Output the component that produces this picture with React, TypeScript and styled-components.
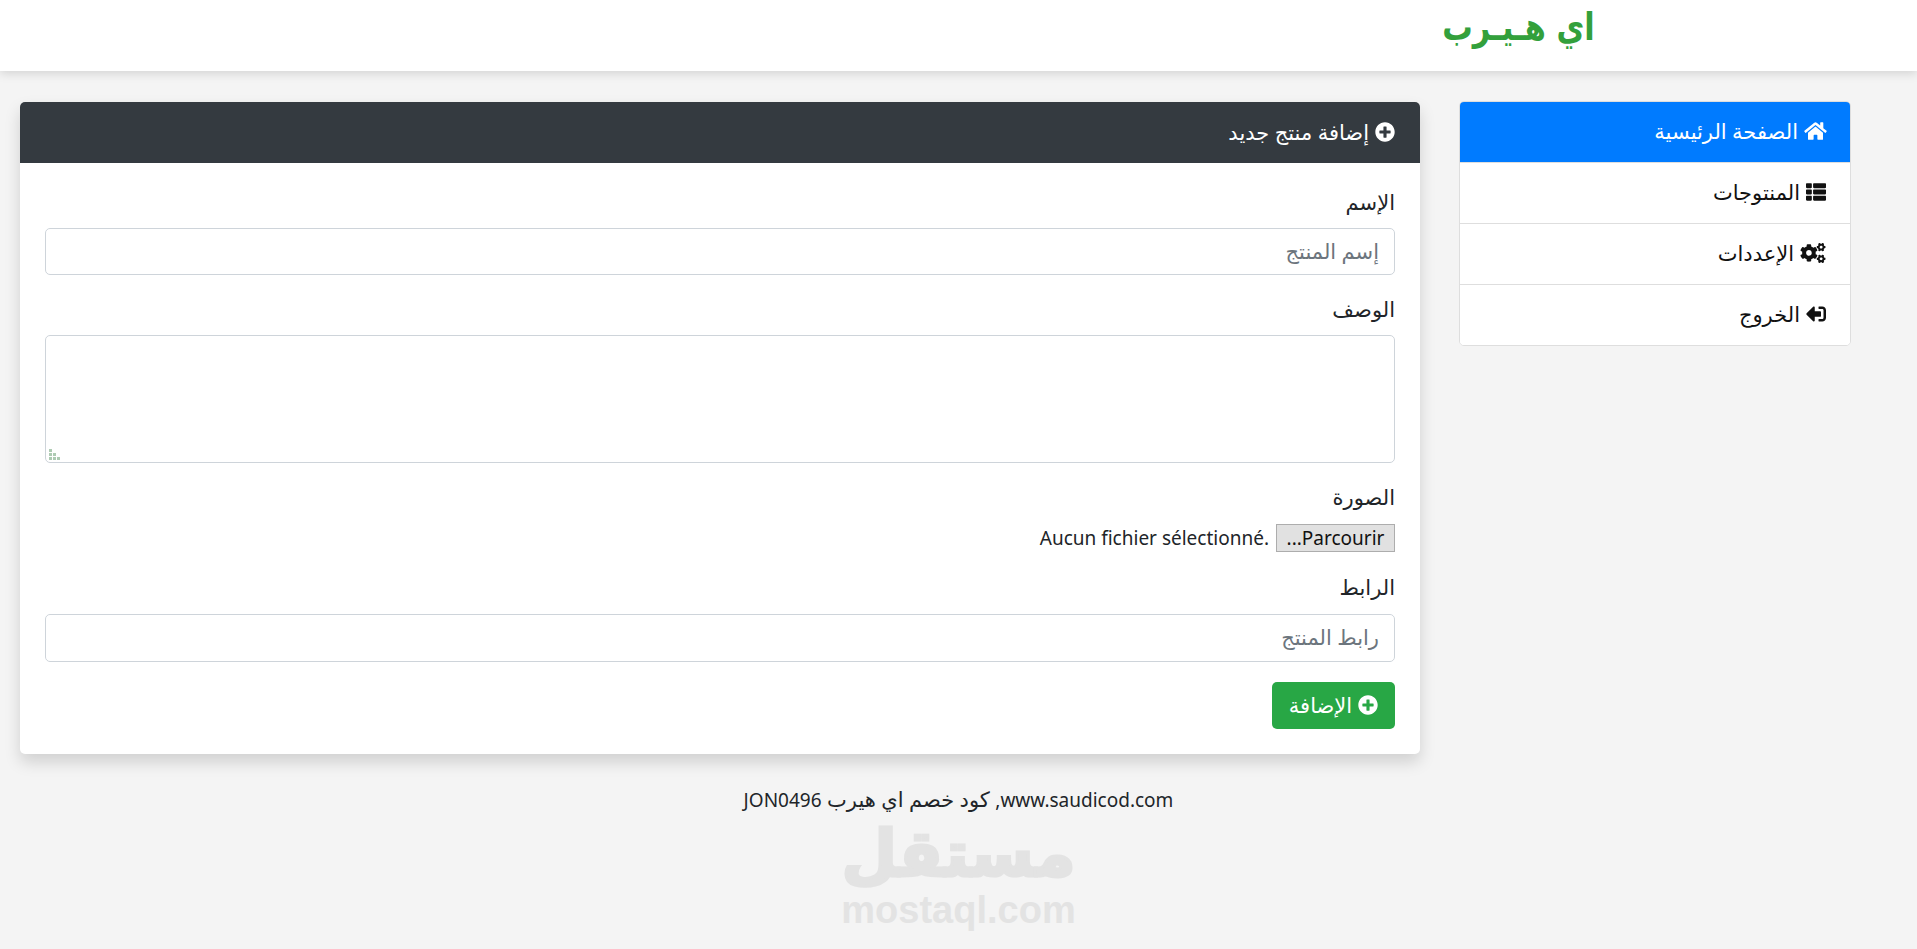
import React from 'react';
import styled, { createGlobalStyle } from 'styled-components';
import { FaCogs, FaHome, FaPlusCircle, FaSignOutAlt, FaThList } from 'react-icons/fa';

const GlobalStyle = createGlobalStyle`
  * {
    box-sizing: border-box;
  }

  html,
  body {
    margin: 0;
    height: 100%;
  }

  body {
    background: #f4f4f4;
    color: #212529;
    font-family: 'Noto Sans', 'DejaVu Sans', sans-serif;
    font-size: 21px;
    overflow: hidden;
  }
`;

function MirrorIcon({ children }: { children: React.ReactNode }) {
  return <Mirror>{children}</Mirror>;
}

const menuItems = [
  { label: 'الصفحة الرئيسية', icon: <FaHome />, iconWidth: 23, active: true },
  { label: 'المنتوجات', icon: <FaThList />, iconWidth: 20 },
  { label: 'الإعددات', icon: <FaCogs />, iconWidth: 26 },
  { label: 'الخروج', icon: <MirrorIcon><FaSignOutAlt /></MirrorIcon>, iconWidth: 20 },
];

const App = () => {
  return (
    <Page dir="rtl">
      <GlobalStyle />
      <Navbar>
        <Logo>اي هـيـرب</Logo>
      </Navbar>
      <Content>
        <Sidebar>
          {menuItems.map((item) => (
            <MenuItem key={item.label} $active={item.active} $iconWidth={item.iconWidth}>
              {item.icon}
              <span>{item.label}</span>
            </MenuItem>
          ))}
        </Sidebar>
        <Main>
          <Card>
            <CardHeader>
              <FaPlusCircle />
              <span>إضافة منتج جديد</span>
            </CardHeader>
            <CardBody>
              <Field>
                <Label htmlFor="name">الإسم</Label>
                <Input id="name" placeholder="إسم المنتج" />
              </Field>
              <Field>
                <Label htmlFor="desc">الوصف</Label>
                <TextAreaWrap>
                  <TextArea id="desc" />
                  <Grip viewBox="0 0 11 11" aria-hidden="true">
                    <rect x="0" y="0" width="3" height="3" />
                    <rect x="0" y="4" width="3" height="3" />
                    <rect x="4" y="4" width="3" height="3" />
                    <rect x="0" y="8" width="3" height="3" />
                    <rect x="4" y="8" width="3" height="3" />
                    <rect x="8" y="8" width="3" height="3" />
                  </Grip>
                </TextAreaWrap>
              </Field>
              <Field $gap={11}>
                <Label>الصورة</Label>
                <FileRow>
                  <FileButton type="button">Parcourir...</FileButton>
                  <FileName dir="ltr">Aucun fichier sélectionné.</FileName>
                </FileRow>
              </Field>
              <Field $gap={11}>
                <Label htmlFor="link">الرابط</Label>
                <Input id="link" placeholder="رابط المنتج" $tall />
              </Field>
              <SubmitButton type="button">
                <FaPlusCircle />
                <span>الإضافة</span>
              </SubmitButton>
            </CardBody>
          </Card>
        </Main>
      </Content>
      <FooterNote>
        <LatinText>www.saudicod.com,</LatinText> كود خصم اي هيرب <LatinText>JON0496</LatinText>
      </FooterNote>
      <Watermark>
        <WatermarkMark>مستقل</WatermarkMark>
        <WatermarkUrl dir="ltr">mostaql.com</WatermarkUrl>
      </Watermark>
    </Page>
  );
};

export default App;

const Page = styled.div`
  min-height: 100vh;
`;

const Navbar = styled.header`
  display: flex;
  align-items: center;
  height: 71px;
  padding-right: 322px;
  background: #fff;
  box-shadow: 0 2px 10px rgba(0, 0, 0, 0.15);
`;

const Logo = styled.div`
  color: #33a03c;
  font-family: 'DejaVu Sans', sans-serif;
  font-size: 38px;
  font-weight: 700;
  line-height: 1;
  margin-top: -18px;
  transform: scaleX(0.8);
  transform-origin: right center;
  white-space: nowrap;
`;

const Content = styled.div`
  display: flex;
  align-items: flex-start;
  gap: 39px;
  padding: 30px 66px 0 20px;
`;

const Sidebar = styled.nav`
  flex: 0 0 392px;
  display: flex;
  flex-direction: column;
  border: 1px solid #dedede;
  border-radius: 5px;
  background: #fff;
  overflow: hidden;
`;

const MenuItem = styled.a<{ $active?: boolean; $iconWidth: number }>`
  display: flex;
  align-items: center;
  gap: 6px;
  height: 61px;
  margin: ${(props) => (props.$active ? '-1px -1px 0' : '0')};
  padding: 0 24px 2px;
  background: ${(props) => (props.$active ? '#007bff' : '#fff')};
  color: ${(props) => (props.$active ? '#fff' : '#111')};

  & + & {
    border-top: 1px solid #dedede;
  }

  & svg {
    width: ${(props) => props.$iconWidth}px;
    height: 20px;
    flex: none;
  }
`;

const Mirror = styled.span`
  display: inline-flex;
  transform: scaleX(-1);
`;

const Main = styled.main`
  flex: 1;
  min-width: 0;
  padding-top: 1px;
`;

const Card = styled.section`
  background: #fff;
  border-radius: 5px;
  box-shadow: 0 8px 16px rgba(0, 0, 0, 0.15);
  overflow: hidden;
`;

const CardHeader = styled.div`
  display: flex;
  align-items: center;
  gap: 6px;
  height: 61px;
  padding: 0 25px 2px;
  background: #343a40;
  color: #fff;

  & svg {
    width: 20px;
    height: 20px;
  }
`;

const CardBody = styled.div`
  display: flex;
  flex-direction: column;
  align-items: stretch;
  gap: 20px;
  padding: 25px;
`;

const Field = styled.div<{ $gap?: number }>`
  display: flex;
  flex-direction: column;
  gap: ${(props) => props.$gap ?? 10}px;
`;

const Label = styled.label`
  line-height: 28px;
  margin-bottom: 2px;
  color: #212529;
`;

const Input = styled.input<{ $tall?: boolean }>`
  width: 100%;
  height: ${(props) => (props.$tall ? '48px' : '47px')};
  padding: 0 15px 2px;
  border: 1px solid #ced4da;
  border-radius: 5px;
  background: #fff;
  font: inherit;
  outline: none;

  &::placeholder {
    color: #6c757d;
    opacity: 1;
  }
`;

const TextAreaWrap = styled.div`
  position: relative;
  height: 128px;
`;

const TextArea = styled.textarea`
  display: block;
  width: 100%;
  height: 100%;
  border: 1px solid #ced4da;
  border-radius: 5px;
  background: #fff;
  resize: none;
  outline: none;
`;

const Grip = styled.svg`
  position: absolute;
  left: 4px;
  bottom: 3px;
  width: 11px;
  height: 11px;
  fill: #aecbb3;
`;

const FileRow = styled.div`
  display: flex;
  align-items: flex-start;
  gap: 7px;
  height: 29px;
`;

const FileButton = styled.button`
  width: 119px;
  height: 28px;
  padding: 0;
  border: 1px solid #adadad;
  background: #e1e1e1;
  color: #111;
  font: 19px/26px 'Noto Sans', sans-serif;
`;

const FileName = styled.span`
  color: #212529;
  font-size: 19px;
  line-height: 28px;
`;

const SubmitButton = styled.button`
  display: flex;
  align-items: center;
  justify-content: center;
  gap: 6px;
  align-self: flex-start;
  width: 123px;
  height: 47px;
  padding: 0 0 2px;
  border: none;
  border-radius: 5px;
  background: #28a745;
  color: #fff;
  font: inherit;

  & svg {
    width: 20px;
    height: 20px;
  }
`;

const FooterNote = styled.p`
  margin: 31px 0 0;
  text-align: center;
  line-height: 28px;
`;

const LatinText = styled.span`
  font-size: 19px;
`;

const Watermark = styled.div`
  display: flex;
  flex-direction: column;
  align-items: center;
  margin-top: 2px;
  color: #e3e3e3;
  font-weight: 700;
`;

const WatermarkMark = styled.div`
  font-family: 'DejaVu Sans', sans-serif;
  font-size: 64px;
  line-height: 76px;
  -webkit-text-stroke: 3px #e3e3e3;
`;

const WatermarkUrl = styled.div`
  font-family: 'Liberation Sans', sans-serif;
  font-size: 38px;
  line-height: 36px;
`;
